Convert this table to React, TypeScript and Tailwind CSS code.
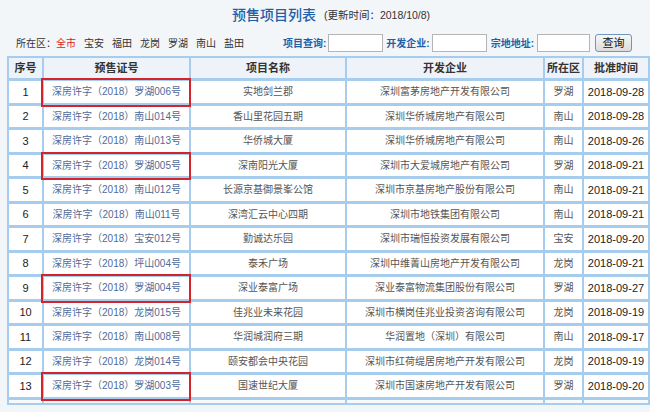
import React from "react";

type Row = {
  no: number;
  permit: string;
  name: string;
  dev: string;
  dist: string;
  date: string;
  mark?: boolean;
};

const rows: Row[] = [
  { no: 1, permit: "深房许字（2018）罗湖006号", name: "实地剑兰郡", dev: "深圳富茅房地产开发有限公司", dist: "罗湖", date: "2018-09-28", mark: true },
  { no: 2, permit: "深房许字（2018）南山014号", name: "香山里花园五期", dev: "深圳华侨城房地产有限公司", dist: "南山", date: "2018-09-28" },
  { no: 3, permit: "深房许字（2018）南山013号", name: "华侨城大厦", dev: "深圳华侨城房地产有限公司", dist: "南山", date: "2018-09-26" },
  { no: 4, permit: "深房许字（2018）罗湖005号", name: "深南阳光大厦", dev: "深圳市大爱城房地产有限公司", dist: "罗湖", date: "2018-09-21", mark: true },
  { no: 5, permit: "深房许字（2018）南山012号", name: "长源京基御景峯公馆", dev: "深圳市京基房地产股份有限公司", dist: "南山", date: "2018-09-21" },
  { no: 6, permit: "深房许字（2018）南山011号", name: "深湾汇云中心四期", dev: "深圳市地铁集团有限公司", dist: "南山", date: "2018-09-21" },
  { no: 7, permit: "深房许字（2018）宝安012号", name: "勤诚达乐园", dev: "深圳市瑞恒投资发展有限公司", dist: "宝安", date: "2018-09-20" },
  { no: 8, permit: "深房许字（2018）坪山004号", name: "泰禾广场", dev: "深圳中维菁山房地产开发有限公司", dist: "龙岗", date: "2018-09-21" },
  { no: 9, permit: "深房许字（2018）罗湖004号", name: "深业泰富广场", dev: "深业泰富物流集团股份有限公司", dist: "罗湖", date: "2018-09-27", mark: true },
  { no: 10, permit: "深房许字（2018）龙岗015号", name: "佳兆业未来花园", dev: "深圳市横岗佳兆业投资咨询有限公司", dist: "龙岗", date: "2018-09-19" },
  { no: 11, permit: "深房许字（2018）南山008号", name: "华润城润府三期", dev: "华润置地（深圳）有限公司", dist: "南山", date: "2018-09-17" },
  { no: 12, permit: "深房许字（2018）龙岗014号", name: "颐安都会中央花园", dev: "深圳市红荷缇居房地产开发有限公司", dist: "龙岗", date: "2018-09-19" },
  { no: 13, permit: "深房许字（2018）罗湖003号", name: "国速世纪大厦", dev: "深圳市国速房地产开发有限公司", dist: "罗湖", date: "2018-09-20", mark: true },
];

const districts = ["宝安", "福田", "龙岗", "罗湖", "南山", "盐田"];

const cell = "bg-white flex items-center justify-center h-[21.5px] whitespace-nowrap";
const head = "bg-[#eef3f9] flex items-center justify-center h-[20px] font-bold text-[11px] text-[#333]";

export default function App() {
  return (
    <div
      className="w-[650px] h-[412px] overflow-hidden bg-[#f3f6f9] flex flex-col text-[10px] text-[#444]"
      style={{ fontFamily: '"Liberation Sans", "Noto Sans CJK SC", sans-serif' }}
    >
      {/* Title */}
      <div className="h-[30px] shrink-0 flex items-center justify-center gap-[8px] pl-[12px]">
        <span className="text-[14px] font-medium text-[#1f5fa8]">预售项目列表</span>
        <span className="text-[10.5px] text-[#333] mt-[2px]">(更新时间：2018/10/8)</span>
      </div>

      {/* Filter row */}
      <div className="h-[26px] shrink-0 flex items-center pl-[16px]">
        <span className="text-[#333]">所在区：</span>
        <div className="flex gap-[8px]">
          <span className="text-[#e0201c]">全市</span>
          {districts.map((d) => (
            <span key={d} className="text-[#333]">
              {d}
            </span>
          ))}
        </div>
        <span className="ml-[39px] font-bold text-[#1f5fa8]">项目查询:</span>
        <div className="ml-[2px] w-[55px] h-[18px] bg-white border border-[#b5b5b5]" />
        <span className="ml-[3px] font-bold text-[#1f5fa8]">开发企业:</span>
        <div className="ml-[2px] w-[55px] h-[18px] bg-white border border-[#b5b5b5]" />
        <span className="ml-[4px] font-bold text-[#1f5fa8]">宗地地址:</span>
        <div className="ml-[3px] w-[53px] h-[18px] bg-white border border-[#b5b5b5]" />
        <div className="ml-[5px] w-[37px] h-[18px] rounded-[3px] border border-[#6f95c0] bg-gradient-to-b from-[#f7f7f7] to-[#dcdcdc] flex items-center justify-center text-[11px] text-[#111]">
          查询
        </div>
      </div>

      {/* Table */}
      <div className="shrink-0 ml-[7px] w-[643px] bg-[#a7cdee] p-[2px]">
        <div className="grid grid-cols-[33px_145px_154px_196px_37px_64px] gap-x-[2px] gap-y-[3px]">
          <div className={head}>序号</div>
          <div className={head}>预售证号</div>
          <div className={head}>项目名称</div>
          <div className={head}>开发企业</div>
          <div className={head}>所在区</div>
          <div className={head}>批准时间</div>

          {rows.map((r) => (
            <React.Fragment key={r.no}>
              <div className={`${cell} text-[11px] text-[#222]`}>{r.no}</div>
              <div className={`${cell} relative text-[#4f6a98]`}>
                {r.permit}
                {r.mark && (
                  <div className="absolute left-[-3px] right-[-2px] top-[-3px] bottom-[-4px] border-2 border-[#d4232b] z-10" />
                )}
              </div>
              <div className={`${cell} text-[#555]`}>{r.name}</div>
              <div className={`${cell} text-[#555]`}>{r.dev}</div>
              <div className={`${cell} text-[#555]`}>{r.dist}</div>
              <div className={`${cell} text-[11px] text-[#222]`}>{r.date}</div>
            </React.Fragment>
          ))}

          {Array.from({ length: 6 }).map((_, i) => (
            <div key={i} className="bg-[#f7f9fb] h-[3px]" />
          ))}
        </div>
      </div>
    </div>
  );
}
